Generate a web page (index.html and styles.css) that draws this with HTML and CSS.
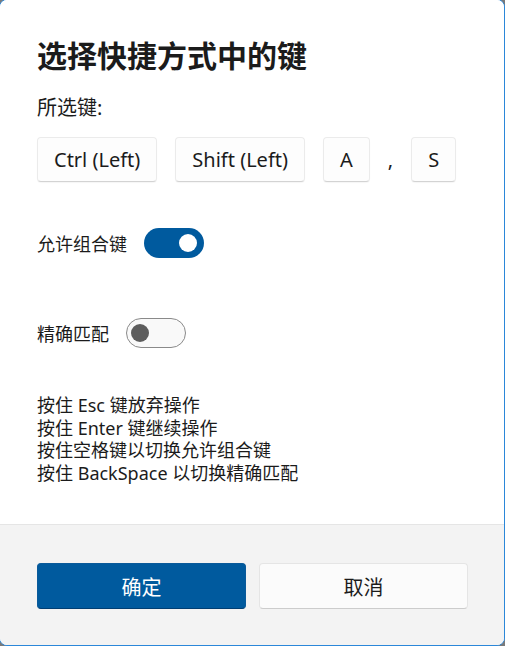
FILE: index.html
```html
<!DOCTYPE html>
<html lang="zh-CN">
<head>
<meta charset="utf-8">
<title>选择快捷方式中的键</title>
<link rel="stylesheet" href="styles.css">
</head>
<body>
<div class="dialog">
  <div class="content">
    <h1 class="title">选择快捷方式中的键</h1>
    <div class="subtitle">所选键:</div>
    <div class="keys">
      <span class="key">Ctrl (Left)</span>
      <span class="key">Shift (Left)</span>
      <span class="key">A</span>
      <span class="comma">,</span>
      <span class="key">S</span>
    </div>
    <div class="toggle-row row-combo">
      <span class="label">允许组合键</span>
      <span class="toggle on"><span class="knob"></span></span>
    </div>
    <div class="toggle-row row-exact">
      <span class="label">精确匹配</span>
      <span class="toggle off"><span class="knob"></span></span>
    </div>
    <div class="hints">
      <div>按住 Esc 键放弃操作</div>
      <div>按住 Enter 键继续操作</div>
      <div>按住空格键以切换允许组合键</div>
      <div>按住 BackSpace 以切换精确匹配</div>
    </div>
  </div>
  <div class="footer">
    <button class="btn primary">确定</button>
    <button class="btn secondary">取消</button>
  </div>
</div>
</body>
</html>
```

FILE: styles.css
```css
html, body {
  margin: 0;
  padding: 0;
}
body {
  background: #7a7a7a;
  width: 505px;
  height: 646px;
  overflow: hidden;
  font-family: "Noto Sans", "Noto Sans CJK SC", sans-serif;
  color: #1b1b1b;
}
.dialog {
  box-sizing: border-box;
  width: 506px;
  height: 647px;
  margin: -1px 0 0 -1px;
  border: 1px solid #2b87d9;
  border-radius: 8px;
  overflow: hidden;
  display: flex;
  flex-direction: column;
  background: #ffffff;
}
.content {
  flex: 1;
  padding: 36px 0 0 37px;
  background: #ffffff;
}
.title {
  margin: 0;
  font-size: 30px;
  line-height: 40px;
  font-weight: 700;
  color: #1b1b1b;
}
.subtitle {
  margin-top: 18px;
  font-size: 20px;
  line-height: 28px;
}
.keys {
  margin-top: 15px;
  display: flex;
  align-items: baseline;
  gap: 18px;
}
.key {
  box-sizing: border-box;
  height: 45px;
  padding: 0 16px;
  display: inline-flex;
  align-items: center;
  font-size: 20px;
  background: #fdfdfd;
  border: 1px solid #ebebeb;
  border-bottom-color: #d3d3d3;
  border-radius: 4px;
  color: #1b1b1b;
  box-shadow: 0 1px 1px rgba(0, 0, 0, 0.04);
}
.comma {
  font-size: 20px;
}
.toggle-row {
  display: flex;
  align-items: center;
  gap: 17px;
  height: 30px;
}
.row-combo {
  margin-top: 46px;
}
.row-exact {
  margin-top: 60px;
}
.label {
  font-size: 18px;
}
.toggle {
  box-sizing: border-box;
  width: 60px;
  height: 30px;
  border-radius: 15px;
  display: flex;
  align-items: center;
}
.toggle .knob {
  width: 18px;
  height: 18px;
  border-radius: 50%;
}
.toggle.on {
  background: #005a9e;
  justify-content: flex-end;
  padding-right: 7px;
}
.toggle.on .knob {
  background: #ffffff;
}
.toggle.off {
  background: #f9f9f9;
  border: 1px solid #8a8a8a;
  padding-left: 4px;
}
.toggle.off .knob {
  background: #5d5d5d;
}
.hints {
  margin-top: 46px;
  font-size: 18px;
  line-height: 22.7px;
  color: #1b1b1b;
}
.footer {
  height: 121px;
  box-sizing: border-box;
  background: #f3f3f3;
  border-top: 1px solid #e5e5e5;
  padding: 38px 36px 0 37px;
  display: grid;
  grid-template-columns: 1fr 1fr;
  column-gap: 13px;
  align-content: start;
}
.btn {
  height: 46px;
  border-radius: 4px;
  font-family: "Noto Sans", "Noto Sans CJK SC", sans-serif;
  font-size: 20px;
  cursor: pointer;
}
.btn.primary {
  background: #005a9e;
  color: #ffffff;
  border: 1px solid #0a5a9a;
  border-bottom-color: #003e73;
}
.btn.secondary {
  background: #fbfbfb;
  color: #1b1b1b;
  border: 1px solid #e5e5e5;
  border-bottom-color: #cccccc;
}
```
